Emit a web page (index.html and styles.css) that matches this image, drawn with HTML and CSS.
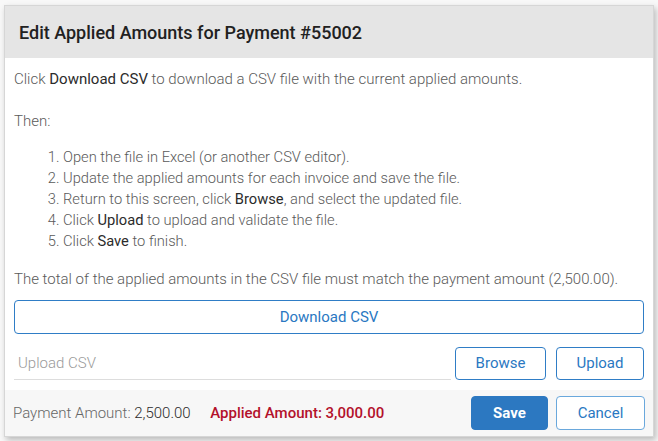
FILE: index.html
```html
<!DOCTYPE html>
<html>
<head>
<meta charset="utf-8">
<link rel="stylesheet" href="styles.css">
</head>
<body>
<div class="modal">
  <div class="modal-header">
    <h1 class="title">Edit Applied Amounts for Payment #55002</h1>
  </div>
  <div class="modal-body">
    <p class="intro">Click <b>Download CSV</b> to download a CSV file with the current applied amounts.</p>
    <p class="then">Then:</p>
    <ol class="steps">
      <li>Open the file in Excel (or another CSV editor).</li>
      <li>Update the applied amounts for each invoice and save the file.</li>
      <li>Return to this screen, click <b>Browse</b>, and select the updated file.</li>
      <li>Click <b>Upload</b> to upload and validate the file.</li>
      <li>Click <b>Save</b> to finish.</li>
    </ol>
    <p class="note">The total of the applied amounts in the CSV file must match the payment amount (2,500.00).</p>
    <button class="btn btn-block">Download CSV</button>
    <div class="upload-row">
      <div class="upload-field">Upload CSV</div>
      <button class="btn btn-browse">Browse</button>
      <button class="btn btn-upload">Upload</button>
    </div>
  </div>
  <div class="modal-footer">
    <div class="amounts">
      <span class="label">Payment Amount:</span> <span class="value">2,500.00</span>
      <span class="applied">Applied Amount: 3,000.00</span>
    </div>
    <button class="btn btn-primary">Save</button>
    <button class="btn btn-cancel">Cancel</button>
  </div>
</div>
</body>
</html>
```
FILE: styles.css
```css
* { box-sizing: border-box; }
html, body { margin: 0; padding: 0; }
body {
  background: #f8f8f8;
  font-family: Roboto, "Liberation Sans", sans-serif;
  width: 658px;
  height: 441px;
  overflow: hidden;
  padding: 5px 0 0 4px;
}
.modal {
  width: 650px;
  background: #fff;
  border: 1px solid #d6d6d6;
  box-shadow: 2px 3px 6px rgba(0,0,0,0.25);
}
.modal-header {
  background: #e5e5e5;
  height: 52px;
  display: flex;
  align-items: center;
  padding: 0 14px;
}
.title {
  margin: 0;
  font-size: 18px;
  font-weight: 500;
  color: #212121;
}
.modal-body {
  padding: 11px 9px 10px 9px;
  color: #5a5a5a;
  font-size: 15px;
  font-weight: 300;
  line-height: 21px;
}
.modal-body b { font-weight: 400; color: #2b2b2b; }
.modal-body p { margin: 0; }
.intro { margin-bottom: 21px !important; }
.steps {
  margin: 15px 0 17px 0;
  padding-left: 49px;
  font-size: 14.7px;
}
.btn {
  font-family: Roboto, "Liberation Sans", sans-serif;
  font-size: 15px;
  font-weight: 400;
  color: #2a78c2;
  background: #fff;
  border: 1px solid #2f7dc6;
  border-radius: 4px;
  height: 33px;
  padding: 0;
  cursor: pointer;
}
.note { margin-bottom: 10px !important; }
.btn-block {
  display: block;
  width: 100%;
  height: 34px;
}
.upload-row {
  display: flex;
  align-items: center;
  margin-top: 12px;
}
.upload-field {
  flex: 1;
  height: 34px;
  border-bottom: 1px solid #ddd;
  color: #9a9a9a;
  font-size: 15px;
  font-weight: 300;
  display: flex;
  align-items: center;
  padding: 2px 0 0 4px;
  margin-right: 4px;
}
.btn-browse { width: 91px; margin-right: 10px; }
.btn-upload { width: 88px; }
.modal-footer {
  background: #f7f7f7;
  display: flex;
  align-items: center;
  padding: 6px 8px 6px 8px;
  height: 46px;
}
.amounts {
  flex: 1;
  font-size: 15px;
  font-weight: 300;
  color: #666;
}
.amounts .value { color: #2b2b2b; font-weight: 300; }
.amounts .applied {
  color: #b3112b;
  font-weight: 500;
  margin-left: 16px;
}
.btn-primary {
  background: #2c78c1;
  border-color: #2c78c1;
  color: #fff;
  font-weight: 700;
  width: 77px;
  height: 34px;
  margin-right: 8px;
}
.btn-cancel {
  width: 89px;
  height: 34px;
  border-color: #6aa8dc;
}
```
